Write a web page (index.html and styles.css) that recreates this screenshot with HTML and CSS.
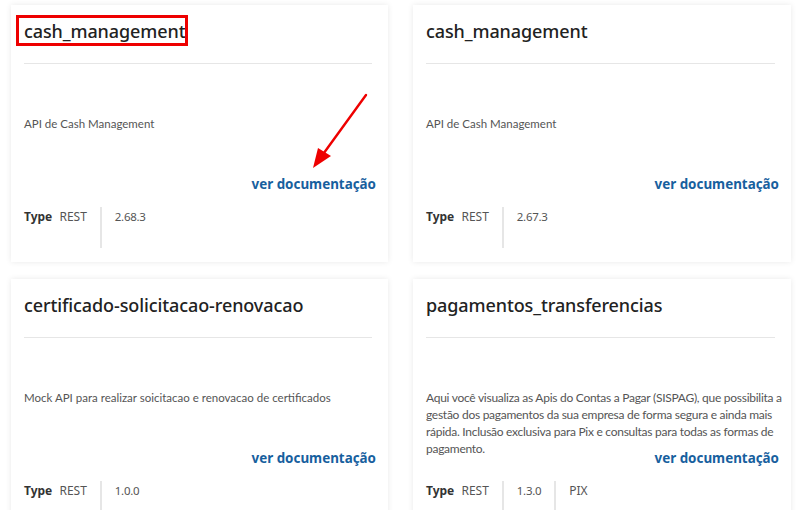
FILE: index.html
```html
<!DOCTYPE html>
<html lang="pt-BR">
<head>
<meta charset="utf-8">
<title>APIs</title>
<link rel="stylesheet" href="styles.css">
</head>
<body>
<div class="grid">
  <div class="card">
    <h2 class="title">cash_management</h2>
    <div class="rule"></div>
    <p class="desc">API de Cash Management</p>
    <a class="doc" href="#">ver documentação</a>
    <div class="meta">
      <div class="cell"><b>Type</b> REST</div>
      <div class="cell num">2.68.3</div>
    </div>
    <div class="mark-box"></div>
    <svg class="mark-arrow" width="60" height="90" viewBox="0 0 60 90">
      <line x1="57" y1="8" x2="12" y2="70" stroke="#ee0000" stroke-width="2.4" stroke-linecap="round"/>
      <polygon points="4,81 9,61 22,69" fill="#ee0000"/>
    </svg>
  </div>
  <div class="card">
    <h2 class="title">cash_management</h2>
    <div class="rule"></div>
    <p class="desc">API de Cash Management</p>
    <a class="doc" href="#">ver documentação</a>
    <div class="meta">
      <div class="cell"><b>Type</b> REST</div>
      <div class="cell num">2.67.3</div>
    </div>
  </div>
  <div class="card">
    <h2 class="title">certificado-solicitacao-renovacao</h2>
    <div class="rule"></div>
    <p class="desc">Mock API para realizar soicitacao e renovacao de certificados</p>
    <a class="doc" href="#">ver documentação</a>
    <div class="meta">
      <div class="cell"><b>Type</b> REST</div>
      <div class="cell num">1.0.0</div>
    </div>
  </div>
  <div class="card">
    <h2 class="title">pagamentos_transferencias</h2>
    <div class="rule"></div>
    <p class="desc wide">Aqui você visualiza as Apis do Contas a Pagar (SISPAG), que possibilita a<br>gestão dos pagamentos da sua empresa de forma segura e ainda mais<br>rápida. Inclusão exclusiva para Pix e consultas para todas as formas de<br>pagamento.</p>
    <a class="doc" href="#">ver documentação</a>
    <div class="meta">
      <div class="cell"><b>Type</b> REST</div>
      <div class="cell num">1.3.0</div>
      <div class="cell">PIX</div>
    </div>
  </div>
</div>
</body>
</html>
```
FILE: styles.css
```css
html, body {
  margin: 0;
  padding: 0;
  background: #ffffff;
  overflow: hidden;
}
body {
  font-family: "Noto Sans", "Open Sans", sans-serif;
  color: #333;
}
.grid {
  display: grid;
  grid-template-columns: 377px 378px;
  column-gap: 25px;
  row-gap: 17px;
  padding: 5px 0 0 11px;
}
.card {
  position: relative;
  background: #fff;
  box-shadow: 0 0 6px rgba(0, 0, 0, 0.09);
  padding: 13px 12px 14px 13px;
  display: flex;
  flex-direction: column;
  height: 230px;
}
.title {
  margin: 0;
  font-size: 18px;
  line-height: 26px;
  font-weight: 500;
  letter-spacing: -0.1px;
  color: #222;
  white-space: nowrap;
}
.rule {
  margin: 19px 4px 0 0;
  border-top: 1px solid #e6e6e6;
}
.desc {
  margin: 51px 0 0 0;
  height: 59px;
  font-family: "Lato", "Noto Sans", sans-serif;
  font-size: 11.5px;
  line-height: 17px;
  color: #555;
  overflow: visible;
}
.desc.wide {
  margin-right: -8px;
  font-size: 12px;
  letter-spacing: -0.27px;
  white-space: nowrap;
}
.doc {
  display: block;
  text-align: right;
  font-size: 13.4px;
  line-height: 20px;
  font-weight: 700;
  color: #17609e;
  text-decoration: none;
}
.meta {
  margin-top: 13px;
  display: flex;
  height: 41px;
}
.cell {
  padding: 1px 13px 0;
  font-size: 12px;
  line-height: 18px;
  color: #555;
  border-left: 2px solid #e6e6e6;
}
.cell.num {
  font-size: 11.5px;
  letter-spacing: -0.3px;
}
.cell:first-child {
  padding-left: 0;
  border-left: none;
}
.cell b {
  color: #333;
  margin-right: 4px;
}
.mark-box {
  position: absolute;
  left: 5px;
  top: 10px;
  width: 166px;
  height: 25px;
  border: 3px solid #ee0000;
}
.mark-arrow {
  position: absolute;
  left: 298px;
  top: 82px;
}
```
